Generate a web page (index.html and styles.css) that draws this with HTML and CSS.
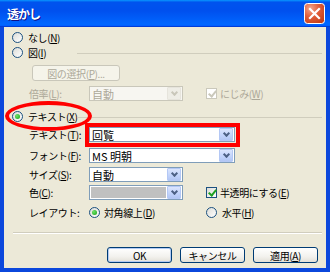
FILE: index.html
```html
<!DOCTYPE html>
<html lang="ja">
<head>
  <meta charset="UTF-8" />
  <title>透かし</title>
  <link rel="stylesheet" href="styles.css">
</head>
<body>

<div class="window">
  <div class="titlebar">
    <span class="title">透かし</span>
    <button class="close">
      <svg width="21" height="21" viewBox="0 0 21 21">
        <defs>
          <radialGradient id="red" cx="30%" cy="25%" r="90%">
            <stop offset="0" stop-color="#f4a68c"/>
            <stop offset="0.45" stop-color="#e2603c"/>
            <stop offset="1" stop-color="#c23a14"/>
          </radialGradient>
        </defs>
        <rect x="0.5" y="0.5" width="20" height="20" rx="3" fill="url(#red)" stroke="#fff"/>
        <path d="M6 6 L15 15 M15 6 L6 15" stroke="#fff" stroke-width="2.2" stroke-linecap="square"/>
      </svg>
    </button>
  </div>

  <div class="content">
    <div class="row r1">
      <label class="opt"><span class="radio"></span>なし(<u>N</u>)</label>
    </div>
    <div class="row r2">
      <label class="opt head"><span class="radio"></span>図(<u>I</u>)</label>
      <span class="rule"></span>
    </div>
    <div class="row r3 indent">
      <button class="btn disabled pick">図の選択(<u>P</u>)...</button>
    </div>
    <div class="row r4 indent">
      <span class="lbl disabled">倍率(<u>L</u>):</span>
      <div class="combo small disabled"><span class="val">自動</span><span class="drop"></span></div>
      <label class="check disabled"><span class="box on"></span>にじみ(<u>W</u>)</label>
    </div>
    <div class="row r5">
      <label class="opt head"><span class="radio on"></span>テキスト(<u>X</u>)</label>
      <span class="rule"></span>
    </div>
    <div class="row r6 indent">
      <span class="lbl">テキスト(<u>T</u>):</span>
      <div class="combo wide"><span class="val">回覧</span><span class="drop"></span></div>
    </div>
    <div class="row r7 indent">
      <span class="lbl">フォント(<u>F</u>):</span>
      <div class="combo wide"><span class="val">MS 明朝</span><span class="drop"></span></div>
    </div>
    <div class="row r8 indent">
      <span class="lbl">サイズ(<u>S</u>):</span>
      <div class="combo small"><span class="val">自動</span><span class="drop"></span></div>
    </div>
    <div class="row r9 indent">
      <span class="lbl">色(<u>C</u>):</span>
      <div class="combo small"><span class="swatch"></span><span class="drop"></span></div>
      <label class="check"><span class="box on"></span>半透明にする(<u>E</u>)</label>
    </div>
    <div class="row r10 indent">
      <span class="lbl">レイアウト:</span>
      <label class="opt layout"><span class="radio on"></span>対角線上(<u>D</u>)</label>
      <label class="opt"><span class="radio"></span>水平(<u>H</u>)</label>
    </div>

    <div class="separator"></div>

    <div class="footer">
      <button class="btn default">OK</button>
      <button class="btn">キャンセル</button>
      <button class="btn">適用(<u>A</u>)</button>
    </div>
  </div>

  <!-- red annotation marks drawn over the dialog -->
  <div class="mark-ellipse"></div>
  <div class="mark-rect"></div>
</div>

</body>
</html>
```

FILE: styles.css
```css
* {
  box-sizing: border-box;
}

body {
  margin: 0;
  font-family: "Noto Sans CJK JP", sans-serif;
  font-size: 10px;
  letter-spacing: -0.4px;
}

u {
  text-decoration: underline;
  text-underline-offset: 1px;
}

.window {
  position: relative;
  width: 330px;
  height: 272px;
  display: flex;
  flex-direction: column;
  padding: 0 4px 4px;
  background: #0b47dc;
}

/* Title bar */
.titlebar {
  height: 27px;
  margin: 0 -4px;
  padding: 0 5px 0 7px;
  display: flex;
  align-items: center;
  justify-content: space-between;
  background: linear-gradient(180deg, #0997ff, #0053ee 8%, #0050ee 40%, #06f 88%, #06f 93%, #005bff 95%, #003dd7 96%, #003dd7);
}

.title {
  color: #fff;
  font-size: 12px;
  font-weight: bold;
  letter-spacing: -1px;
  text-shadow: 1px 1px #0f1089;
}

.close {
  width: 21px;
  height: 21px;
  padding: 0;
  border: none;
  background: none;
  display: block;
}

.close svg {
  display: block;
}

/* Dialog body */
.content {
  flex: 1;
  display: flex;
  flex-direction: column;
  padding: 3px 4px 0 8px;
  background: #ece9d8;
}

.row {
  display: flex;
  align-items: center;
}

.indent {
  padding-left: 17px;
}

.r1 { height: 14px; }
.r2 { height: 16px; }
.r3 { height: 16px; margin-top: 5px; }
.r4 { height: 15px; margin-top: 5px; }
.r5 { height: 14px; margin-top: 8px; }
.r6 { height: 15px; margin-top: 4px; }
.r7 { height: 15px; margin-top: 6px; }
.r8 { height: 15px; margin-top: 4px; }
.r9 { height: 15px; margin-top: 3px; }
.r10 { height: 14px; margin-top: 5px; }

.opt, .check {
  display: flex;
  align-items: center;
  white-space: nowrap;
}

.opt.head {
  width: 65px;
}

.opt.layout {
  width: 117px;
}

.rule {
  flex: 1;
  border-top: 1px solid #d0cdbd;
  margin-top: 3px;
}

.lbl {
  width: 60px;
  white-space: nowrap;
}

.disabled {
  color: #aca899;
}

/* Radio buttons */
.radio {
  position: relative;
  width: 11px;
  height: 11px;
  margin-right: 5px;
  border: 1px solid #1c5180;
  border-radius: 50%;
  background: linear-gradient(135deg, #dcdcd7, #fff);
  flex-shrink: 0;
}

.radio.on::after {
  content: "";
  position: absolute;
  left: 2px;
  top: 2px;
  width: 5px;
  height: 5px;
  border-radius: 50%;
  background: radial-gradient(circle at 35% 35%, #6fe36b, #17a312);
}

.layout .radio {
  margin-right: 4px;
}

/* Check boxes */
.check {
  margin-left: 23px;
}

.box {
  position: relative;
  width: 11px;
  height: 11px;
  margin-right: 3px;
  border: 1px solid #1c5180;
  background: linear-gradient(135deg, #dcdcd7, #fff);
  flex-shrink: 0;
}

.box.on::after {
  content: "";
  position: absolute;
  left: 3px;
  top: 0;
  width: 3px;
  height: 6px;
  border-right: 2px solid #21a121;
  border-bottom: 2px solid #21a121;
  transform: rotate(40deg);
}

.check.disabled .box {
  border-color: #cac8bb;
  background: #fff;
}

.check.disabled .box.on::after {
  border-color: #cac8bb;
}

/* Combo boxes */
.combo {
  height: 15px;
  display: flex;
  align-items: center;
  border: 1px solid #7f9db9;
  background: #fff;
  padding: 0 1px 0 2px;
}

.combo.small { width: 94px; }
.combo.wide { width: 146px; }

.combo .val {
  flex: 1;
  font-size: 11px;
  letter-spacing: 0;
  white-space: nowrap;
}

.combo .swatch {
  flex: 1;
  height: 11px;
  margin-left: -1px;
  margin-right: 1px;
  background: #c0c0c0;
}

.drop {
  width: 14px;
  height: 13px;
  display: flex;
  align-items: center;
  justify-content: center;
  border: 1px solid #b4c8f5;
  border-radius: 1px;
  background: linear-gradient(#dbe5fd, #c1d3fb 60%, #b2c6f4);
}

.drop::after {
  content: "";
  width: 3px;
  height: 3px;
  margin-top: -3px;
  border-right: 2px solid #4d6185;
  border-bottom: 2px solid #4d6185;
  transform: rotate(45deg);
}

.combo.disabled {
  border-color: #c9c7ba;
  background: #f7f6f1;
}

.combo.disabled .drop {
  border-color: #e6e4dc;
  background: #eeede6;
}

.combo.disabled .drop::after {
  border-color: #c9c7ba;
}

/* Push buttons */
.btn {
  height: 16px;
  width: 65px;
  padding: 0;
  font-family: inherit;
  font-size: 10px;
  letter-spacing: -0.4px;
  color: #000;
  border: 1px solid #003c74;
  border-radius: 3px;
  background: linear-gradient(#fff, #f3f2ee 60%, #e3e0d8);
}

.btn.pick {
  width: 88px;
  margin-left: 3px;
}

.btn.disabled {
  color: #aca899;
  border-color: #c9c7ba;
  background: #f5f4ea;
}

.btn.default {
  box-shadow: inset 0 0 0 1px #b3cbf3;
}

.separator {
  margin: 13px 0 0 1px;
  border-top: 1px solid #d0cdbd;
  border-bottom: 1px solid #fff;
}

.footer {
  display: flex;
  justify-content: flex-end;
  gap: 8px;
  margin-top: 13px;
  padding-right: 4px;
}

/* Red annotation marks */
.mark-ellipse {
  position: absolute;
  left: 5px;
  top: 101px;
  width: 87px;
  height: 30px;
  border: 4px solid #f00;
  border-radius: 50%;
}

.mark-rect {
  position: absolute;
  left: 85px;
  top: 123px;
  width: 155px;
  height: 24px;
  border: 4px solid #f00;
}
```
